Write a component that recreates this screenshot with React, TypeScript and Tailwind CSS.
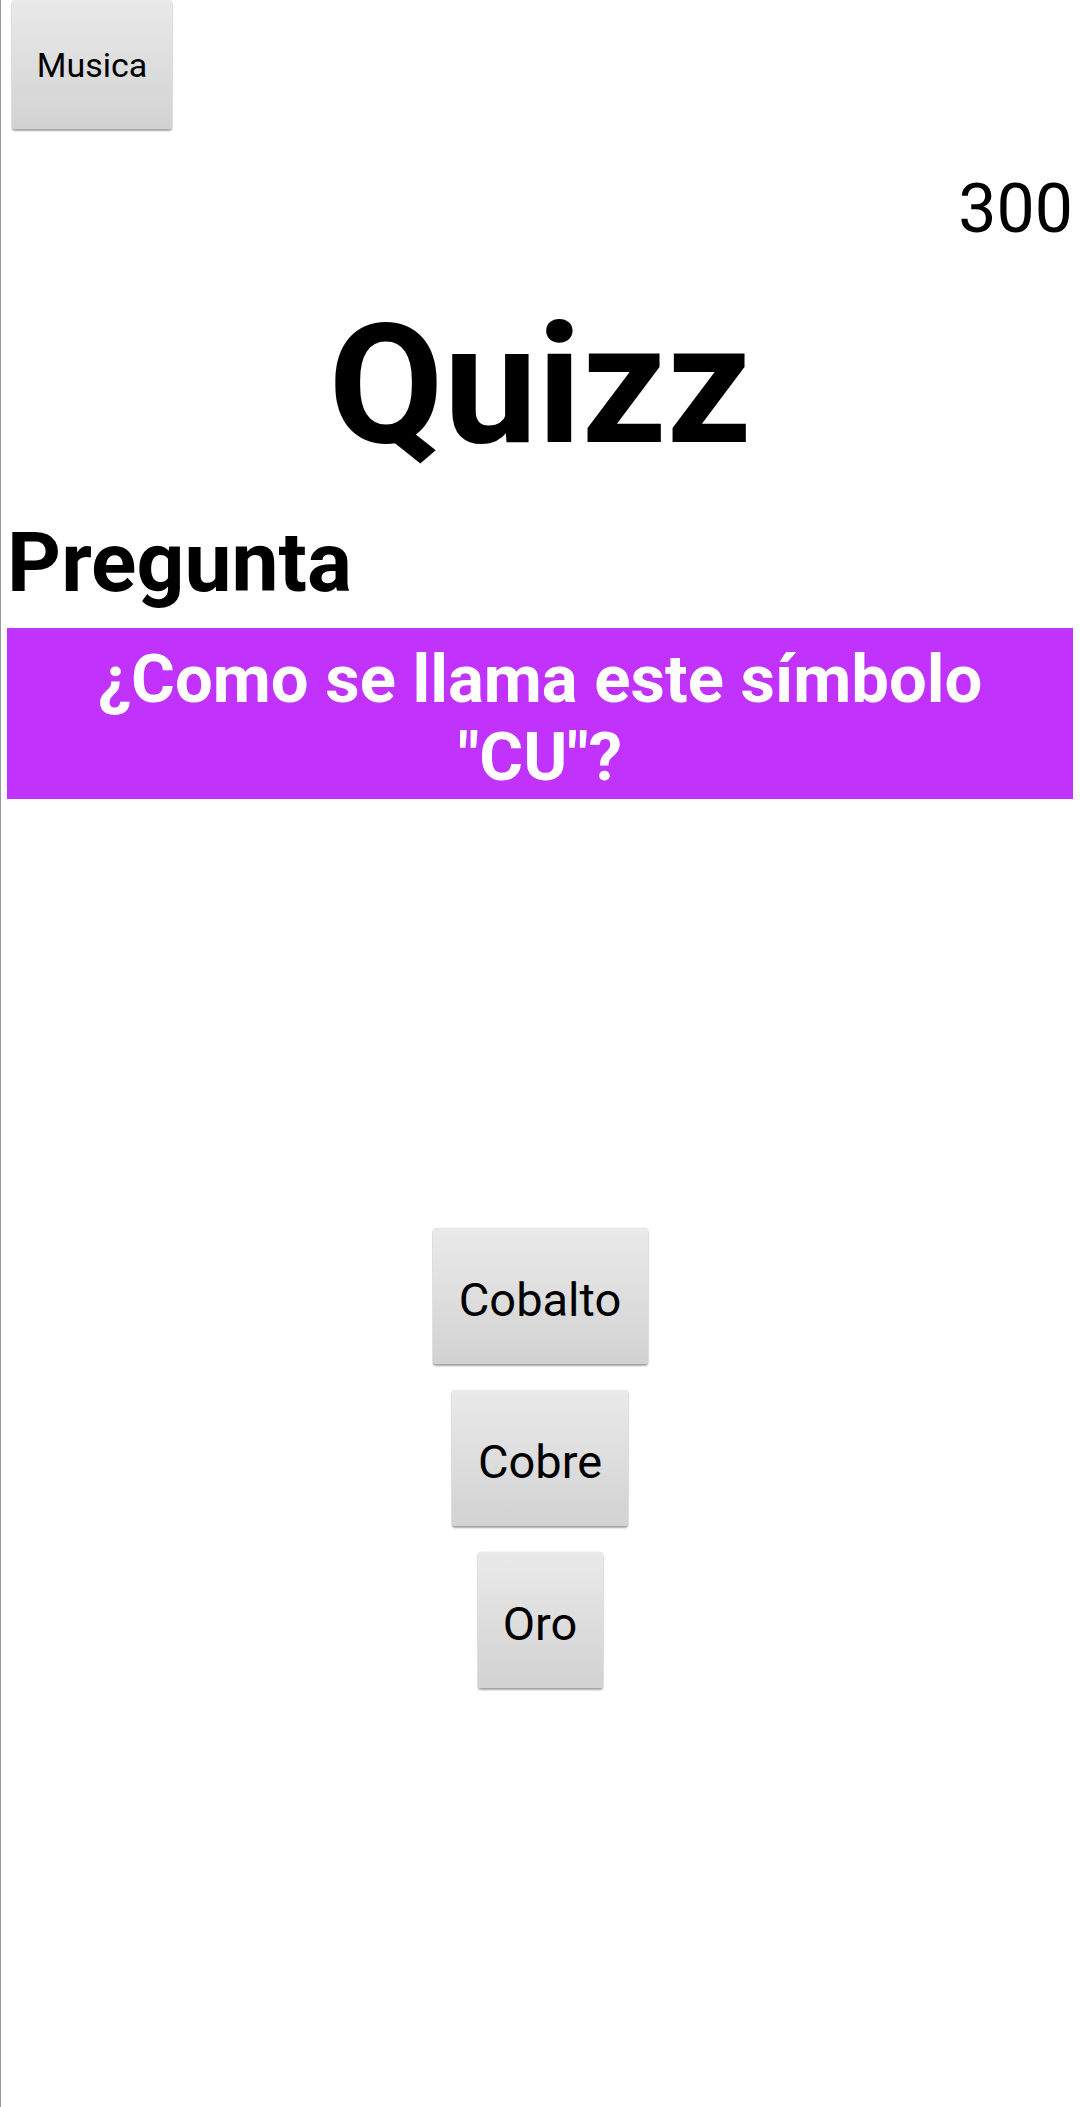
import React from "react";

function AndroidButton({
  label,
  className,
}: {
  label: string;
  className: string;
}) {
  return (
    <button
      className={
        "flex items-center justify-center rounded-[3px] bg-linear-to-b from-[#eaeaea] to-[#d2d2d2] text-black shadow-[0_2px_2px_rgba(0,0,0,0.35),0_0_1px_rgba(0,0,0,0.35)] " +
        className
      }
    >
      {label}
    </button>
  );
}

export default function App() {
  return (
    <div className="min-h-[2107px] w-[1080px] bg-white border-l border-[#9a9a9a] font-[family-name:Roboto,sans-serif] text-black">
      <div className="px-[6px] pr-[7px]">
        <div className="pl-[5px]">
          <AndroidButton
            label="Musica"
            className="w-[160px] h-[129px] text-[34px] leading-[40px]"
          />
        </div>

        <div className="mt-[40px] text-right text-[68px] leading-[80px] font-normal">
          300
        </div>

        <h1 className="mt-[38px] text-center text-[167px] leading-[196px] font-bold">
          Quizz
        </h1>

        <h2 className="mt-[31px] text-[84px] leading-[98px] font-bold">
          Pregunta
        </h2>

        <div className="mt-[16px] h-[171px] bg-[#c132fd] pt-[12px] text-center text-[67px] leading-[78px] font-bold text-white">
          ¿Como se llama este símbolo
          <br />
          "CU"?
        </div>

        <div className="mt-[429px] flex flex-col items-center gap-[26px]">
          <AndroidButton
            label="Cobalto"
            className="w-[215px] h-[136px] pt-[6px] text-[47px] leading-[55px]"
          />
          <AndroidButton
            label="Cobre"
            className="w-[176px] h-[136px] pt-[6px] text-[47px] leading-[55px]"
          />
          <AndroidButton
            label="Oro"
            className="w-[125px] h-[136px] pt-[6px] text-[47px] leading-[55px]"
          />
        </div>
      </div>
    </div>
  );
}
